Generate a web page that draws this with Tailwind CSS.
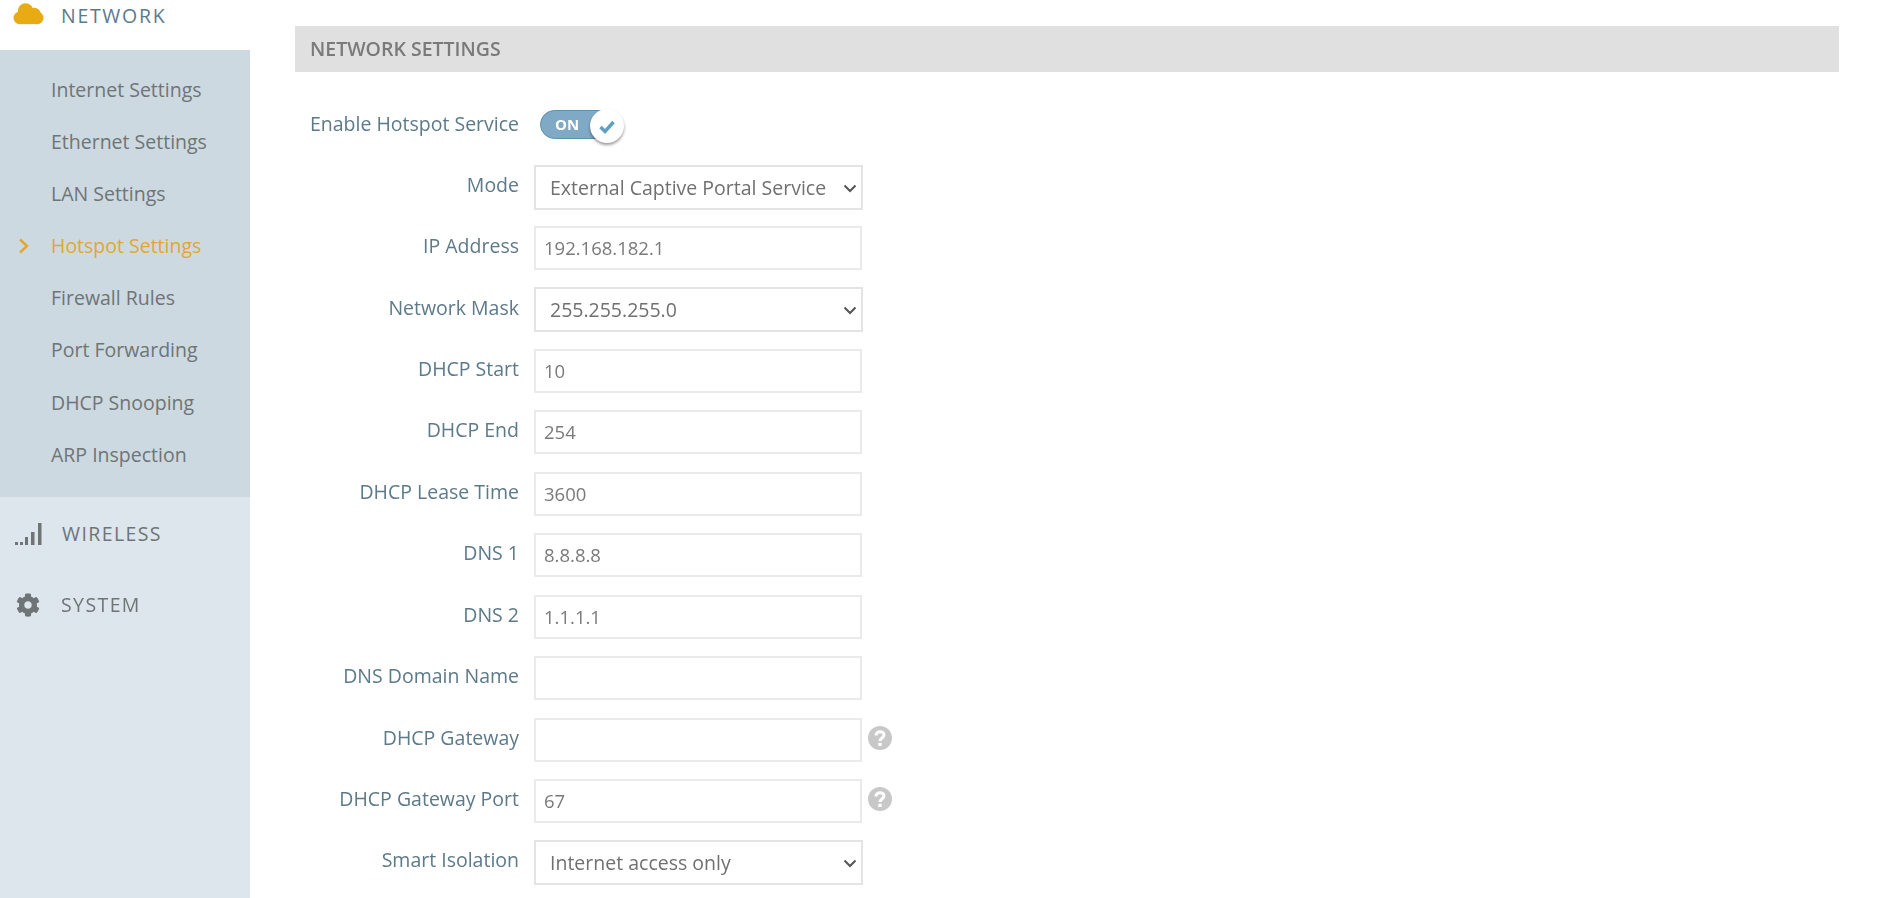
<!DOCTYPE html>
<html lang="en">
<head>
  <meta charset="UTF-8" />
  <title>Network Settings</title>
  <script src="https://cdn.jsdelivr.net/npm/@tailwindcss/browser@4"></script>
</head>
<body class="bg-white font-['Open_Sans',sans-serif] text-[19.5px] h-[898px] overflow-hidden flex blur-[0.4px]">
  <!-- sidebar -->
  <aside class="w-[250px] shrink-0 bg-[#dde6ec] h-full">
    <div class="h-[50px] bg-white flex items-start pl-[13px] text-[#5c7a8a]">
      <svg class="w-[31px] h-[26px] mt-[1px]" viewBox="0 0 32 26" fill="#e9ab14">
        <circle cx="13" cy="10" r="8" />
        <circle cx="22" cy="13" r="6.5" />
        <circle cx="7" cy="17" r="6.5" />
        <circle cx="25" cy="17" r="6.5" />
        <rect x="7" y="14" width="18" height="9.5" />
      </svg>
      <span class="ml-[17px] tracking-[1.7px] leading-[32px]">NETWORK</span>
    </div>
    <ul class="h-[447px] bg-[#ccd9e0] pt-[14px] text-[#6f7476]">
      <li class="h-[52.1px] pl-[51px] leading-[52px]">Internet Settings</li>
      <li class="h-[52.1px] pl-[51px] leading-[52px]">Ethernet Settings</li>
      <li class="h-[52.1px] pl-[51px] leading-[52px]">LAN Settings</li>
      <li class="h-[52.1px] pl-[18px] leading-[52px] text-[#e3a72f] flex items-center">
        <svg class="w-[11px] h-[16px] mr-[22px]" viewBox="0 0 11 16" fill="none" stroke="#e3a72f" stroke-width="2.4"><path d="M2 1.500l7 6.500-7 6.500" /></svg>
        Hotspot Settings
      </li>
      <li class="h-[52.1px] pl-[51px] leading-[52px]">Firewall Rules</li>
      <li class="h-[52.1px] pl-[51px] leading-[52px]">Port Forwarding</li>
      <li class="h-[52.1px] pl-[51px] leading-[52px]">DHCP Snooping</li>
      <li class="h-[52.1px] pl-[51px] leading-[52px]">ARP Inspection</li>
    </ul>
    <div class="h-[71px] mt-[1px] pl-[15px] flex items-center text-[#6f7476] tracking-[1.4px]">
      <svg class="w-[27px] h-[24px]" viewBox="0 0 27 24" fill="#6f7476">
        <rect x="0" y="20" width="3" height="3" /><rect x="5" y="20" width="3" height="3" />
        <rect x="10" y="15" width="3" height="8" /><rect x="16" y="10" width="3.5" height="13" />
        <rect x="23" y="1" width="3.5" height="22" />
      </svg>
      <span class="ml-[20px]">WIRELESS</span>
    </div>
    <div class="h-[71px] pl-[16px] flex items-center text-[#6f7476] tracking-[1.4px]">
      <svg class="w-[24px] h-[24px]" viewBox="0 0 512 512" fill="#6f7476"><path d="M487.4 315.7l-42.6-24.6c4.3-23.2 4.3-47 0-70.2l42.6-24.6c4.9-2.8 7.1-8.6 5.5-14-11.1-35.6-30-67.8-54.7-94.6-3.8-4.1-10-5.1-14.8-2.3L380.8 110c-17.9-15.4-38.5-27.3-60.8-35.1V25.8c0-5.6-3.9-10.5-9.4-11.7-36.7-8.2-74.3-7.8-109.2 0-5.5 1.2-9.4 6.1-9.4 11.7V75c-22.2 7.9-42.8 19.8-60.8 35.1L88.7 85.5c-4.9-2.8-11-1.9-14.8 2.3-24.7 26.7-43.6 58.9-54.7 94.6-1.7 5.4.6 11.2 5.5 14L67.3 221c-4.3 23.2-4.3 47 0 70.2l-42.6 24.6c-4.9 2.8-7.1 8.6-5.5 14 11.1 35.6 30 67.8 54.7 94.6 3.8 4.1 10 5.1 14.8 2.3l42.6-24.6c17.9 15.4 38.5 27.3 60.8 35.1v49.2c0 5.6 3.9 10.5 9.4 11.7 36.7 8.2 74.3 7.8 109.2 0 5.5-1.2 9.4-6.1 9.4-11.7v-49.2c22.2-7.9 42.8-19.8 60.8-35.1l42.6 24.6c4.9 2.8 11 1.9 14.8-2.3 24.7-26.7 43.6-58.9 54.7-94.6 1.5-5.5-.7-11.3-5.6-14.1zM256 336c-44.1 0-80-35.9-80-80s35.9-80 80-80 80 35.9 80 80-35.9 80-80 80z"/></svg>
      <span class="ml-[21px]">SYSTEM</span>
    </div>
  </aside>

  <!-- main -->
  <main class="ml-[45px] mr-[40px] flex-1 pt-[26px]">
    <h2 class="h-[46px] bg-[#e0e0e0] pl-[15px] leading-[46px] text-[19.500px] font-semibold text-[#7a7a7a]">NETWORK SETTINGS</h2>

    <form class="mt-[39px] text-[#5c7a8a]">
      <div class="flex h-[32px] mb-[22px]">
        <label class="w-[224px] text-right leading-[32px] -mt-[3px]">Enable Hotspot Service</label>
        <div class="relative ml-[21px] w-[84px] h-[29px] mt-[-1px]">
          <div class="w-[75px] h-[29px] rounded-full bg-[#7fa9c5] border border-[#5f90ae] text-white text-[15px] font-bold leading-[27px] pl-[14px]">ON</div>
          <div class="absolute right-0 top-[-1px] w-[34px] h-[34px] rounded-full bg-white shadow-[0_2px_3px_rgba(0,0,0,0.4)] flex items-center justify-center">
            <svg class="w-[18px] h-[15px]" viewBox="0 0 17 15" fill="none" stroke="#5f9fc4" stroke-width="3.4"><path d="M2 8l4.500 4.500L15 3" /></svg>
          </div>
        </div>
      </div>

      <div class="flex h-[45px] mb-[16px]">
        <label class="w-[224px] text-right leading-[39px]">Mode</label>
        <div class="relative ml-[15px] w-[329px]">
          <select class="appearance-none w-full h-[45px] border-2 border-[#e4e4e4] bg-white pl-[14px] text-[#707070]"><option>External Captive Portal Service</option></select>
          <svg class="absolute right-[6px] top-[19px] w-[14px] h-[9px] pointer-events-none" viewBox="0 0 14 9" fill="none" stroke="#555" stroke-width="2"><path d="M1.500 1.500L7 7l5.500-5.500" /></svg>
        </div>
      </div>
      <div class="flex h-[44px] mb-[17px]">
        <label class="w-[224px] text-right leading-[40px]">IP Address</label>
        <input class="ml-[15px] w-[328px] h-[44px] border-2 border-[#eaeaea] pl-[8px] pb-[2px] text-[18.500px] text-[#7a7a7a]" value="192.168.182.1" />
      </div>
      <div class="flex h-[45px] mb-[17px]">
        <label class="w-[224px] text-right leading-[41px]">Network Mask</label>
        <div class="relative ml-[15px] w-[329px]">
          <select class="appearance-none w-full h-[45px] border-2 border-[#e4e4e4] bg-white pl-[14px] text-[#707070]"><option>255.255.255.0</option></select>
          <svg class="absolute right-[6px] top-[19px] w-[14px] h-[9px] pointer-events-none" viewBox="0 0 14 9" fill="none" stroke="#555" stroke-width="2"><path d="M1.500 1.500L7 7l5.500-5.500" /></svg>
        </div>
      </div>
      <div class="flex h-[44px] mb-[17px]">
        <label class="w-[224px] text-right leading-[40px]">DHCP Start</label>
        <input class="ml-[15px] w-[328px] h-[44px] border-2 border-[#eaeaea] pl-[8px] pb-[2px] text-[18.500px] text-[#7a7a7a]" value="10" />
      </div>
      <div class="flex h-[44px] mb-[18px]">
        <label class="w-[224px] text-right leading-[40px]">DHCP End</label>
        <input class="ml-[15px] w-[328px] h-[44px] border-2 border-[#eaeaea] pl-[8px] pb-[2px] text-[18.500px] text-[#7a7a7a]" value="254" />
      </div>
      <div class="flex h-[44px] mb-[17px]">
        <label class="w-[224px] text-right leading-[40px]">DHCP Lease Time</label>
        <input class="ml-[15px] w-[328px] h-[44px] border-2 border-[#eaeaea] pl-[8px] pb-[2px] text-[18.500px] text-[#7a7a7a]" value="3600" />
      </div>
      <div class="flex h-[44px] mb-[18px]">
        <label class="w-[224px] text-right leading-[40px]">DNS 1</label>
        <input class="ml-[15px] w-[328px] h-[44px] border-2 border-[#eaeaea] pl-[8px] pb-[2px] text-[18.500px] text-[#7a7a7a]" value="8.8.8.8" />
      </div>
      <div class="flex h-[44px] mb-[17px]">
        <label class="w-[224px] text-right leading-[40px]">DNS 2</label>
        <input class="ml-[15px] w-[328px] h-[44px] border-2 border-[#eaeaea] pl-[8px] pb-[2px] text-[18.500px] text-[#7a7a7a]" value="1.1.1.1" />
      </div>
      <div class="flex h-[44px] mb-[18px]">
        <label class="w-[224px] text-right leading-[40px]">DNS Domain Name</label>
        <input class="ml-[15px] w-[328px] h-[44px] border-2 border-[#eaeaea] pl-[8px] pb-[2px] text-[18.500px] text-[#7a7a7a]" value="" />
      </div>
      <div class="flex h-[44px] mb-[17px]">
        <label class="w-[224px] text-right leading-[40px]">DHCP Gateway</label>
        <input class="ml-[15px] w-[328px] h-[44px] border-2 border-[#eaeaea] pl-[8px] pb-[2px] text-[18.500px] text-[#7a7a7a]" value="" />
        <svg class="ml-[6px] mt-[8px] w-[24px] h-[24px]" viewBox="0 0 24 24"><circle cx="12" cy="12" r="12" fill="#c8c8c8" /><path d="M8 9.500c0-5 8-5 8-.5 0 3-4 3-4 6" fill="none" stroke="#fff" stroke-width="3" /><rect x="10.300" y="16.800" width="3.400" height="3.200" fill="#fff" /></svg>
      </div>
      <div class="flex h-[44px] mb-[17px]">
        <label class="w-[224px] text-right leading-[40px]">DHCP Gateway Port</label>
        <input class="ml-[15px] w-[328px] h-[44px] border-2 border-[#eaeaea] pl-[8px] pb-[2px] text-[18.500px] text-[#7a7a7a]" value="67" />
        <svg class="ml-[6px] mt-[8px] w-[24px] h-[24px]" viewBox="0 0 24 24"><circle cx="12" cy="12" r="12" fill="#c8c8c8" /><path d="M8 9.500c0-5 8-5 8-.5 0 3-4 3-4 6" fill="none" stroke="#fff" stroke-width="3" /><rect x="10.300" y="16.800" width="3.400" height="3.200" fill="#fff" /></svg>
      </div>
      <div class="flex h-[45px]">
        <label class="w-[224px] text-right leading-[40px]">Smart Isolation</label>
        <div class="relative ml-[15px] w-[329px]">
          <select class="appearance-none w-full h-[45px] border-2 border-[#e4e4e4] bg-white pl-[14px] text-[#707070]"><option>Internet access only</option></select>
          <svg class="absolute right-[6px] top-[19px] w-[14px] h-[9px] pointer-events-none" viewBox="0 0 14 9" fill="none" stroke="#555" stroke-width="2"><path d="M1.500 1.500L7 7l5.500-5.500" /></svg>
        </div>
      </div>
    </form>
  </main>
</body>
</html>
